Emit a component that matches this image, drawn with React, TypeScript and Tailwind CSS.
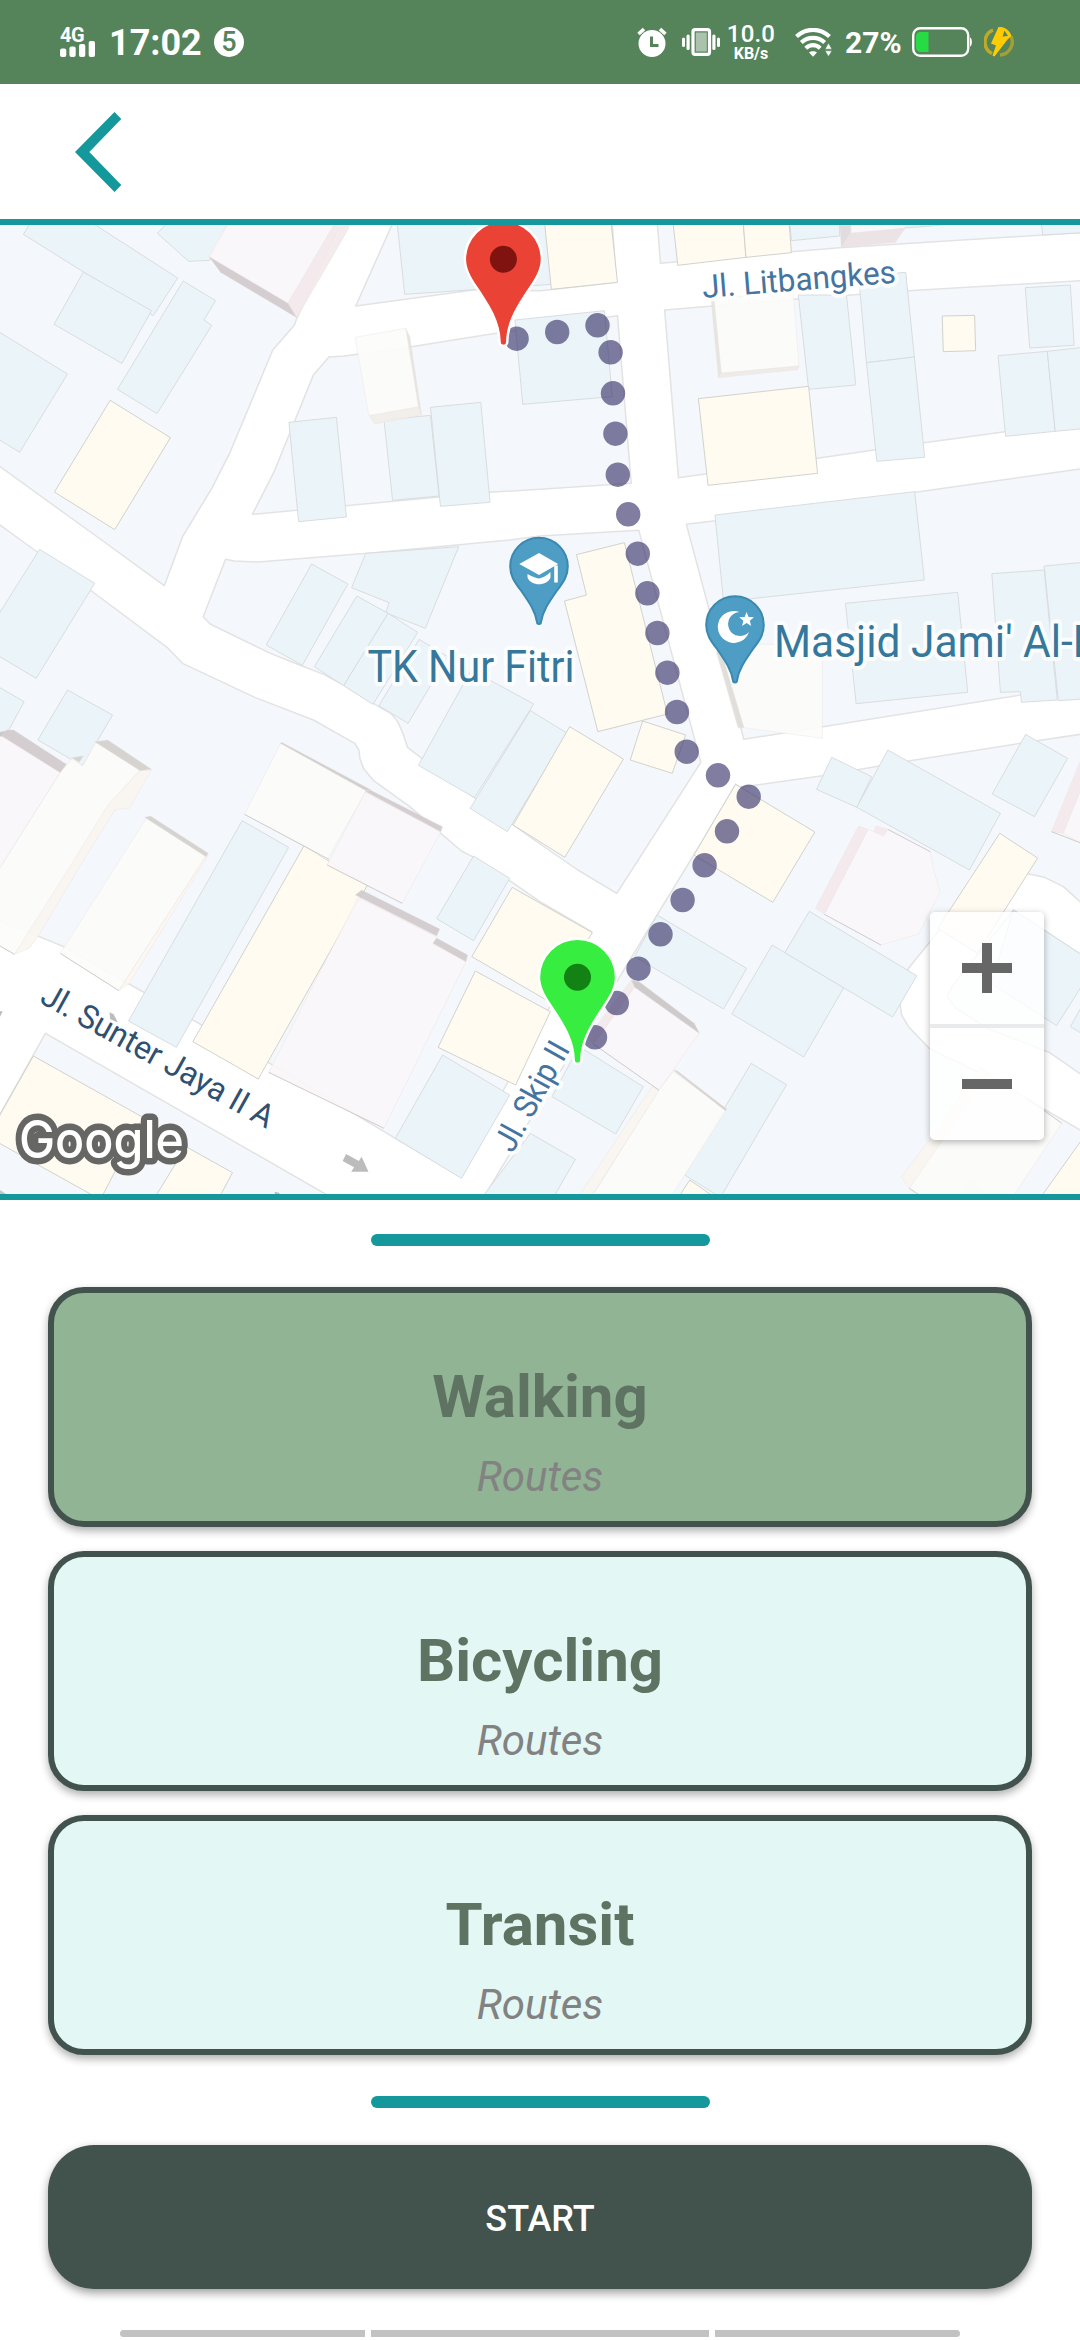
import React from "react";

const ROBOTO = "font-['Roboto',sans-serif]";

const BLOCKS = [
  "-20,-10 995,-10 985,15 862,295 855,315 792,390 668,697 615,805 530,950 477,1097 295,960 0,740 -20,725",
  "1148,-10 1138,15 1033,258 1380,209 1570,212 1790,187 1776,-10",
  "955,411 1000,408 1185,382 1440,340 1793,287 1833,790 1568,808 1422,817 1003,857 733,883 796,755 910,465",
  "1907,-10 1918,130 2298,95 2438,83 3156,37 3156,-10",
  "1930,270 2313,237 2638,212 3156,181 3156,608 2918,635 2683,668 2538,690 2373,715 1970,773",
  "1993,913 2078,902 2658,817 3156,744 3156,1396 2963,1425 2160,1558",
  "655,1018 680,1023 750,1026 1085,998 1480,960 1568,948 1855,931 2035,1627 1791,2020 1678,1950 1568,1872 1490,1815 1370,1728 1225,1615 1183,1582 1170,1540 1155,1505 1135,1480 1080,1448 1000,1397 940,1363 870,1335 785,1300 610,1212 590,1190",
  "-20,900 60,960 262,1110 485,1282 530,1330 740,1432 910,1500 1030,1570 1042,1590 1045,1615 1055,1645 1085,1682 1190,1760 1280,1840 1340,1893 1372,1910 1480,1982 1568,2045 1718,2135 1462,2610 1340,2872 1148,2755 775,2525 560,2400 375,2292 185,2180 110,2148 -20,2095",
  "132,2440 962,2932 -20,2932 -20,2720",
  "2150,1702 2388,1667 2638,1623 2963,1570 3156,1540 3156,2940 1400,2940 1568,2650 1788,2290 1908,2085 2035,1870 2136,1693",
];

const LOOP_ROAD =
  "2988,1962 3033,1972 3088,2000 3136,2045 3156,2060 3156,2742 3028,2665 2938,2610 2868,2570 2818,2545 2698,2485 2638,2420 2618,2385 2613,2350 2638,2245 2728,2130 2868,1980";
const LOOP_ISLAND =
  "2751,2332 2765,2298 2943,2070 3156,2215 3156,2575 3048,2498 2868,2425 2776,2365";

const BLUE = [
  "90,5 68,43 445,287 516,174 262,5",
  "242,156 157,313 354,430 440,272",
  "532,183 626,242 592,300 615,316 456,581 341,508",
  "-10,331 196,462 57,697 -10,654",
  "490,5 457,40 548,124 609,121 665,5",
  "1153,5 1175,223 1601,193 1585,5",
  "839,607 977,592 1006,891 867,905",
  "1115,600 1250,586 1275,828 1140,841",
  "1250,562 1396,547 1423,847 1279,859",
  "1495,300 1755,272 1778,530 1518,553",
  "2293,5 2298,62 2438,48 2438,5",
  "2600,5 2600,26 2740,15 2740,5",
  "3023,5 3028,45 3146,38 3146,5",
  "2318,225 2458,225 2485,495 2348,508",
  "2493,168 2630,157 2655,411 2516,428",
  "2516,428 2655,411 2685,712 2546,724",
  "2977,203 3108,195 3119,376 2990,384",
  "2898,407 3041,394 3064,634 2920,649",
  "3041,394 3146,382 3146,626 3064,634",
  "2076,885 2656,815 2684,1080 2101,1145",
  "2455,1150 2781,1117 2810,1417 2486,1451",
  "2880,1061 3032,1050 3070,1440 2966,1447 2963,1415 2905,1417",
  "3032,1038 3146,1027 3146,1437 3073,1442",
  "2415,1612 2531,1670 2488,1762 2371,1708",
  "2578,1590 2905,1780 2815,1950 2488,1762",
  "2978,1543 3100,1615 3004,1790 2881,1722",
  "115,988 275,1090 105,1375 -10,1304 -10,1193",
  "-10,1397 70,1445 15,1550 -10,1580",
  "196,1410 327,1485 240,1638 110,1560",
  "905,1032 1010,1092 878,1336 773,1275",
  "1062,1000 1332,980 1235,1225 1120,1178 1130,1148 1021,1103",
  "1036,1128 1127,1180 998,1397 913,1340",
  "1127,1180 1213,1237 1083,1453 998,1397",
  "1217,1258 1300,1310 1185,1510 1100,1457",
  "1368,1350 1550,1452 1378,1733 1215,1636",
  "1540,1472 1648,1540 1473,1835 1365,1765",
  "703,1802 838,1882 512,2482 373,2403",
  "1375,1908 1480,1975 1375,2162 1268,2096",
  "1285,2505 1480,2625 1340,2875 1148,2755",
  "1540,2740 1671,2818 1607,2932 1400,2932",
  "1908,2085 2168,2245 2101,2367 1843,2210",
  "2242,2175 2450,2303 2334,2511 2125,2382",
  "2350,2074 2662,2267 2592,2391 2279,2198",
  "2181,2530 2284,2594 2092,2932 2058,2910 1988,2865",
  "1698,2490 1868,2600 1788,2742 1603,2630 1660,2520",
  "2943,2070 3146,2208 3146,2290 3068,2417 2878,2290",
  "3108,2420 3146,2350 3146,2444",
  "2815,2886 2880,2932 2790,2932",
];

const CREAM = [
  "320,541 495,653 333,929 158,816",
  "1581,5 1774,5 1793,187 1601,208",
  "1954,5 2158,5 2166,112 1968,136",
  "2158,5 2291,5 2298,98 2166,112",
  "2028,536 2348,499 2374,760 2056,796",
  "2736,288 2830,286 2833,392 2739,395",
  "1674,1004 1813,968 1938,1482 1736,1535 1639,1143 1703,1125",
  "1866,1503 1991,1545 1952,1660 1830,1620",
  "1654,1520 1810,1617 1640,1912 1490,1815",
  "2136,1693 2366,1836 2244,2047 2015,1905",
  "883,1877 1067,1995 750,2577 560,2465",
  "1487,2002 1720,2138 1595,2345 1370,2210",
  "1380,2253 1598,2375 1497,2595 1272,2482",
  "97,2508 415,2692 295,2932 280,2932 -10,2765 -10,2703",
  "540,2780 675,2858 637,2932 450,2932",
  "2903,1840 3013,1914 2838,2200 2723,2125",
  "3146,2752 3146,2932 3022,2932",
  "2003,2880 2075,2932 1970,2932",
];

type Face = { p: string; c: string };

const ROSE = "fill-[#faf7f9]";
const ROSE_SIDE = "fill-[#f4eaec]";
const ROSE_DARK = "fill-[#d2cbcd]";
const IVORY = "fill-[#fcfcfa]";
const IVORY_SIDE = "fill-[#faf6f1]";
const IVORY_DARK = "fill-[#d3d2ce]";

const TOWERS: Face[] = [
  { p: "665,5 975,5 970,15 836,250 607,110", c: ROSE },
  { p: "970,15 975,5 1015,5 1010,30 862,293 836,250", c: ROSE_SIDE },
  { p: "607,110 836,250 862,293 640,157", c: ROSE_DARK },

  { p: "1178,325 1190,350 1224,585 1215,560", c: "fill-[#e6e4de]" },
  { p: "1071,587 1215,560 1224,585 1088,612", c: "fill-[#f2eee9]" },
  { p: "1031,352 1178,325 1215,560 1071,587", c: IVORY },

  { p: "2470,5 2628,5 2628,25 2470,40", c: ROSE },
  { p: "2438,5 2470,5 2470,40 2443,82", c: "fill-[#e0dadd]" },
  { p: "2470,40 2628,25 2600,67 2443,82", c: "fill-[#ebe2e5]" },

  { p: "2073,235 2303,215 2320,438 2094,460", c: IVORY },
  { p: "2065,240 2073,240 2094,460 2086,473", c: "fill-[#e6e4de]" },
  { p: "2086,473 2094,460 2320,438 2316,449", c: "fill-[#efece7]" },

  { p: "2088,1273 2388,1273 2388,1555 2160,1523", c: IVORY },
  { p: "2080,1295 2092,1290 2160,1523 2143,1523", c: "fill-[#e0ded9]" },

  { p: "2493,1818 2521,1828 2394,2083 2368,2065", c: ROSE_SIDE },
  { p: "2543,1818 2578,1828 2566,1848 2538,1836", c: ROSE_SIDE },
  { p: "2521,1828 2566,1848 2578,1828 2701,1895 2711,1950 2730,2015 2668,2142 2558,2175 2394,2083", c: ROSE },

  { p: "3146,1600 3146,1690 3087,1840 3053,1835", c: ROSE_SIDE },
  { p: "3146,1690 3146,1872 3087,1840", c: ROSE },

  { p: "-10,1540 5,1548 175,1657 -10,1960", c: ROSE },
  { p: "18,1530 40,1530 193,1633 175,1658 5,1548", c: ROSE_DARK },
  { p: "-10,1538 18,1532 5,1550 -10,1546", c: "fill-[#c9c6c6]" },
  { p: "278,1567 407,1650 313,1757 335,1768 42,2203 -10,2172 -10,1960 175,1658 210,1615 240,1638", c: IVORY },
  { p: "407,1650 440,1650 375,1765 335,1768 240,1925 110,2150 85,2185 42,2203 215,1920 312,1757", c: IVORY_SIDE },
  { p: "275,1565 313,1560 440,1648 407,1652", c: IVORY_DARK },
  { p: "208,1613 242,1608 230,1627", c: IVORY_DARK },

  { p: "425,1795 598,1908 345,2312 175,2200", c: IVORY },
  { p: "598,1908 605,1905 375,2290 345,2312", c: "fill-[#fdf7f0]" },
  { p: "420,1792 437,1788 605,1900 598,1910", c: IVORY_DARK },

  { p: "815,1570 1063,1712 950,1920 883,1877 710,1783", c: IVORY },
  { p: "813,1569 820,1568 1078,1710 1063,1712", c: "fill-[#cfcecb]" },
  { p: "1060,1717 1280,1835 1168,2050 950,1935", c: ROSE },
  { p: "1060,1714 1075,1710 1285,1820 1280,1835", c: ROSE_DARK },

  { p: "1040,2032 1270,2152 1258,2172 1353,2225 1115,2725 780,2557", c: ROSE },
  { p: "1032,2025 1050,2010 1277,2127 1268,2148", c: ROSE_DARK },
  { p: "1257,2170 1268,2154 1358,2205 1353,2225", c: ROSE_DARK },

  { p: "1955,2555 2108,2670 1948,2932 1718,2932 1913,2610", c: IVORY },
  { p: "1893,2600 1913,2612 1715,2932 1678,2932", c: IVORY_SIDE },
  { p: "1955,2550 1966,2552 2111,2668 2106,2672", c: IVORY_DARK },
  { p: "1843,2300 2030,2440 1913,2610 1723,2472", c: ROSE },
  { p: "1833,2280 1843,2300 1723,2472 1708,2450", c: ROSE_SIDE },
  { p: "1833,2280 1856,2285 2016,2410 2031,2440 1843,2302", c: "fill-[#cdc8c9]" },

  { p: "2848,2542 3083,2710 2940,2932 2660,2925 2640,2905", c: IVORY },
  { p: "2848,2542 2870,2560 2640,2905 2618,2870 2698,2760", c: IVORY_SIDE },
];

/* Ground edges of the taller buildings. */
const EDGES = [
  "42,2203 -10,2172",
  "175,2200 345,2312",
  "710,1783 955,1918",
  "950,1935 1168,2050",
  "780,2557 1115,2725",
  "1723,2472 1913,2610",
  "2394,2083 2558,2175",
  "2578,1828 2701,1895",
  "3053,1835 3146,1872",
  "2640,2905 2670,2925",
  "2990,2640 3083,2710",
];

const ROUTE: [number, number][] = [
  [516.6, 338.7], [557.2, 332], [597.5, 325.3], [610.6, 352.3], [613, 393.3], [615.4, 433.7],
  [617.8, 474.7], [628.2, 514.3], [637.8, 553.7], [647.4, 593.3], [657.4, 633], [667.4, 672.7],
  [677, 712], [686.7, 751.7], [718, 775.3], [748.7, 796.7], [727, 831.3], [704.6, 865.3],
  [682.6, 900], [660.5, 934.3], [638.5, 968.7], [616.8, 1003], [595, 1037.3],
];

function Marker({ x, y, fill, dot }: { x: number; y: number; fill: string; dot: string }) {
  return (
    <g transform={`translate(${x} ${y})`}>
      <path
        d="M-2.6 82.7C-3 62-13.5 46-27 26C-33 17-37.3 9-37.3 0A37.3 37.3 0 0 1 37.3 0C37.3 9 33 17 27 26C13.5 46 3 62 2.6 82.7A2.6 2.6 0 0 1-2.6 82.7Z"
        fill={fill}
        stroke="#fff"
        strokeWidth="5"
        style={{ paintOrder: "stroke" }}
      />
      <circle r="13.5" fill={dot} />
    </g>
  );
}

function PlacePin({ x, y, children }: { x: number; y: number; children: React.ReactNode }) {
  return (
    <g transform={`translate(${x} ${y})`}>
      <path
        d="M-2 55.500C-3.500 45-9 37-18 24C-25 15-28.800 9-28.800 0A28.800 28.800 0 0 1 28.800 0C28.800 9 25 15 18 24C9 37 3.500 45 2 55.500A2 2 0 0 1-2 55.500Z"
        fill="#4d9dc4"
        stroke="#3b88b0"
        strokeWidth="2"
      />
      {children}
    </g>
  );
}

function MapView() {
  return (
    <section className="relative h-[981px] w-full overflow-hidden border-y-[6px] border-[#15989c] bg-white">
      <svg className="absolute inset-0 h-full w-full" viewBox="0 15 3136 2907" preserveAspectRatio="none">
        <g fill="#f4f8fc" stroke="#e3e3e3" strokeWidth="4.5" strokeLinejoin="round">
          {BLOCKS.map((p) => <polygon key={p} points={p} />)}
          <polygon points={LOOP_ROAD} fill="#fff" />
          <polygon points={LOOP_ISLAND} />
        </g>
        <g fill="#ebf4f8" stroke="#d8dbdd" strokeWidth="2.8">
          {BLUE.map((p) => <polygon key={p} points={p} />)}
        </g>
        <g fill="#fffbf0" stroke="#cfcfca" strokeWidth="2.8">
          {CREAM.map((p) => <polygon key={p} points={p} />)}
        </g>
        <g opacity="0.93">
          {TOWERS.map((f) => (
            <polygon key={f.p} points={f.p} className={f.c} stroke="#e9dfdc" strokeOpacity="0.55" strokeWidth="2" />
          ))}
        </g>
        <g fill="none" stroke="#cfcaca" strokeWidth="2.8">
          {EDGES.map((p) => <polyline key={p} points={p} />)}
        </g>
        <g fill="#bcbcbc">
          <polygon points="1005,2802 1042,2823 1050,2810 1070,2855 1020,2855 1028,2842 995,2823" />
          <polygon points="318,2377 330,2383 342,2407 320,2400" />
          <polygon points="0,2374 8,2374 0,2390" />
          <polygon points="798,2915 810,2918 812,2922 798,2922" />
          <polygon points="0,2910 18,2922 0,2922" fill="#c9c5c5" />
        </g>
      </svg>

      <svg className={`absolute inset-0 h-full w-full ${ROBOTO}`} viewBox="0 225 1080 969">
        <g fill="#2b2661" fillOpacity="0.6">
          {ROUTE.map(([x, y]) => <circle key={`${x}-${y}`} cx={x} cy={y} r="12.2" />)}
        </g>

        <g stroke="#fff" strokeOpacity="0.85" strokeWidth="8" strokeLinejoin="round">
          <text x="367.500" y="682" fontSize="45" textLength="207" lengthAdjust="spacingAndGlyphs" fill="#35789c" style={{ paintOrder: "stroke" }}>TK Nur Fitri</text>
          <text x="774" y="656.500" fontSize="45" textLength="323" lengthAdjust="spacingAndGlyphs" fill="#35789c" style={{ paintOrder: "stroke" }}>Masjid Jami' Al-E</text>
          <text transform="translate(703 298) rotate(-4.500)" fontSize="32" textLength="194" lengthAdjust="spacingAndGlyphs" fill="#4574a0" style={{ paintOrder: "stroke" }}>Jl. Litbangkes</text>
          <text transform="translate(38.500 1002) rotate(29.100)" fontSize="32.500" textLength="261" lengthAdjust="spacingAndGlyphs" fill="#2f5070" strokeWidth="6" style={{ paintOrder: "stroke" }}>Jl. Sunter Jaya II A</text>
          <text transform="translate(512.500 1154) rotate(-61)" fontSize="33" textLength="120" lengthAdjust="spacingAndGlyphs" fill="#4574a0" style={{ paintOrder: "stroke" }}>Jl. Skip II</text>
        </g>

        <PlacePin x={539} y={566.5}>
          <g fill="#fff">
            <path d="M-19.700-2.500L0-13.500L19.200-2.500L0 8.500Z" />
            <path d="M-11.500 7.500C-7 10-3 11.500 0 12C3 11.500 8 9 11.500 5.500V11C8.500 20-8.500 20-11.500 11Z" />
            <path d="M15.200-1h3.600v17h-3.600z" />
          </g>
        </PlacePin>
        <PlacePin x={735} y={625}>
          <path d="M4.500-13A16 16 0 1 0 14 7A12 12 0 1 1 4.500-13Z" fill="#fff" />
          <path d="M11.600-13l2 5 5.400.3-4.200 3.400 1.400 5.200-4.600-2.900-4.600 2.900 1.400-5.200-4.200-3.400 5.400-.3z" fill="#fff" />
        </PlacePin>

        <Marker x={503.4} y={259.3} fill="#ea4335" dot="#80130f" />
        <Marker x={577.5} y={977.3} fill="#37ed3f" dot="#128215" />

        <text
          x="19"
          y="1157.500"
          fontSize="52"
          fontWeight="500"
          textLength="165"
          lengthAdjust="spacingAndGlyphs"
          fill="#fff"
          stroke="#666665"
          strokeWidth="13"
          strokeLinejoin="round"
          className="font-['Inter',sans-serif]"
          style={{ paintOrder: "stroke" }}
        >
          Google
        </text>
      </svg>

      <div className="absolute right-[36px] bottom-[54px] flex h-[228px] w-[114px] flex-col rounded-[5px] bg-white/80 shadow-[0_2px_7px_rgba(0,0,0,0.3)]">
        <button className="flex flex-1 items-center justify-center" aria-label="Zoom in">
          <svg className="h-[50px] w-[50px]" viewBox="0 0 50 50" fill="#666">
            <path d="M20 0h10v20h20v10H30v20H20V30H0V20h20z" />
          </svg>
        </button>
        <div className="h-1 bg-[#e8eaeb]" />
        <button className="flex flex-1 items-center justify-center" aria-label="Zoom out">
          <span className="h-[10px] w-[50px] bg-[#666]" />
        </button>
      </div>
    </section>
  );
}

/* ---------- Status bar ---------- */

function StatusBar() {
  return (
    <header className="flex h-[84px] items-center justify-between bg-[#56845a] pr-[66px] pl-[60px] text-white">
      <div className="flex items-center">
        <div className="flex h-[30px] w-[35px] flex-col justify-between">
          <span className="-mt-[1px] text-[20px] leading-[18px] font-bold tracking-[-0.5px]">4G</span>
          <svg className="-mt-[4px] h-[16px] w-[35px] shrink-0" viewBox="0 0 35 16" fill="#fff">
            <rect x="0" y="7.500" width="6.300" height="8.500" rx="2" />
            <rect x="9.400" y="5.500" width="6.300" height="10.500" rx="2" />
            <rect x="19" y="3" width="6.300" height="13" rx="2" />
            <rect x="28.700" y="0" width="6.300" height="16" rx="2" />
          </svg>
        </div>
        <span className="ml-[14px] w-[94px] pt-[2px] text-[36px] leading-[42px] font-bold whitespace-nowrap">17:02</span>
        <span className="ml-[11px] flex h-[30px] w-[30px] items-center justify-center rounded-full bg-white text-[27px] leading-[30px] font-medium text-[#56845a]">
          5
        </span>
      </div>

      <div className="flex items-center">
        <svg className="h-[30px] w-[30px]" viewBox="0 0 30 30">
          <circle cx="15" cy="16.500" r="13.500" fill="#fff" />
          <path d="M1.500 7L7 2M28.500 7L23 2" stroke="#fff" strokeWidth="3.600" />
          <path d="M14.500 9.500v9h7" fill="none" stroke="#56845a" strokeWidth="3" />
        </svg>
        <svg className="ml-[15px] h-[28px] w-[38px]" viewBox="0 0 38 28" fill="#fff">
          <rect x="0" y="9.500" width="3" height="9.500" rx="1.500" />
          <rect x="4.500" y="6.500" width="3.200" height="15.500" rx="1.500" />
          <rect x="30.300" y="6.500" width="3.200" height="15.500" rx="1.500" />
          <rect x="35" y="9.500" width="3" height="9.500" rx="1.500" />
          <rect x="11" y="1.700" width="16.500" height="24.600" rx="2" fill="none" stroke="#fff" strokeWidth="3.200" />
          <rect x="13.800" y="4.500" width="11" height="19" fillOpacity="0.5" />
        </svg>
        <div className="ml-[6px] flex w-[50px] flex-col items-center">
          <span className="text-[24px] leading-[23px] font-medium tracking-[0.2px]">10.0</span>
          <span className="text-[16px] leading-[16px] font-bold">KB/s</span>
        </div>
        <svg className="ml-[19px] h-[29px] w-[37px]" viewBox="0 0 37 29">
          <g fill="none" stroke="#fff" strokeWidth="4.200">
            <path d="M1.500 8.500C11-.3 25-.3 34.500 8.500" />
            <path d="M6.300 14.500C13 8.300 23 8.300 29.700 14.500" />
            <path d="M10.800 20.200C15 16.200 21 16.200 25.200 20.200" />
          </g>
          <path d="M14 24.500C16 22.800 20 22.800 22 24.500L18 28.800z" fill="#fff" />
          <path d="M33.500 15l3.500 6.200h-7zM33.500 28.500l3.500-5.700h-7z" fill="#fff" stroke="#56845a" strokeWidth="0.600" />
        </svg>
        <span className="ml-[13px] w-[57px] pt-[1px] text-[30px] leading-[36px] font-bold whitespace-nowrap">27%</span>
        <svg className="ml-[10px] h-[30px] w-[61px]" viewBox="0 0 61 30">
          <rect x="1.200" y="1.200" width="55" height="27.600" rx="7" fill="none" stroke="#fff" strokeWidth="2.400" />
          <path d="M16.500 5v20H8.500A4.500 4.500 0 0 1 4 20.500v-11A4.500 4.500 0 0 1 8.500 5z" fill="#27db45" />
          <path d="M58 10.500c2.500.5 2.500 8.500 0 9z" fill="#fff" />
        </svg>
        <svg className="ml-[11px] h-[30px] w-[30px]" viewBox="0 0 30 30">
          <path d="M9 3A13 13 0 0 0 8 26.500" fill="none" stroke="#d6b41b" strokeOpacity="0.8" strokeWidth="3.400" />
          <path d="M27 9.500A13 13 0 0 1 16 28" fill="none" stroke="#d6b41b" strokeOpacity="0.6" strokeWidth="3.400" />
          <path d="M14.500 0C21-.5 26 4 27.500 9L23.500 12.500L10.500 29.500L8.500 28.500L12 18.500L7 16.500z" fill="#ffcc04" />
          <path d="M20.500 3.500L24 9L18.500 9.500z" fill="#56845a" />
        </svg>
      </div>
    </header>
  );
}

/* ---------- Page ---------- */

function RouteCard({ title, selected }: { title: string; selected?: boolean }) {
  return (
    <button
      className={`flex h-[240px] w-full flex-col items-center rounded-[36px] border-[6px] border-[#42524d] pt-[69px] shadow-[0_4px_9px_rgba(0,0,0,0.32)] ${
        selected ? "bg-[#90b494]" : "bg-[#e3f7f5]"
      }`}
    >
      <span className="text-[60px] leading-[70px] font-bold text-[#5f7362]">{title}</span>
      <span className="mt-[20px] text-[42px] leading-[50px] text-[#828282] italic">Routes</span>
    </button>
  );
}

function Handle() {
  return <div className="mx-auto h-[12px] w-[339px] rounded-full bg-[#15989c]" />;
}

export default function App() {
  return (
    <main className={`flex h-[2340px] w-[1080px] flex-col overflow-hidden bg-white ${ROBOTO}`}>
      <StatusBar />

      <nav className="flex h-[135px] items-center pl-[75px]">
        <button aria-label="Back">
          <svg className="block h-[80px] w-[47px]" viewBox="0 0 47 80" fill="#15989c">
            <path d="M39.500 0L46.300 7L14.300 40L46.300 73L39.500 80L0 40z" />
          </svg>
        </button>
      </nav>

      <MapView />

      <section className="flex flex-col px-12">
        <div className="pt-[34px] pb-[41px]">
          <Handle />
        </div>
        <div className="flex flex-col gap-6">
          <RouteCard title="Walking" selected />
          <RouteCard title="Bicycling" />
          <RouteCard title="Transit" />
        </div>
        <div className="pt-[41px] pb-[37px]">
          <Handle />
        </div>
        <button className="h-[144px] w-full rounded-[46px] bg-[#42524d] pt-[4px] text-[36px] leading-[42px] font-medium text-white shadow-[0_4px_10px_rgba(0,0,0,0.38)]">
          START
        </button>
      </section>

      <footer className="mt-auto flex justify-center gap-[6px] pb-[3px]">
        <div className="h-[7px] w-[245px] rounded-l-full bg-[#c2c2c2]" />
        <div className="h-[7px] w-[338px] bg-[#c2c2c2]" />
        <div className="h-[7px] w-[245px] rounded-r-full bg-[#c2c2c2]" />
      </footer>
    </main>
  );
}
